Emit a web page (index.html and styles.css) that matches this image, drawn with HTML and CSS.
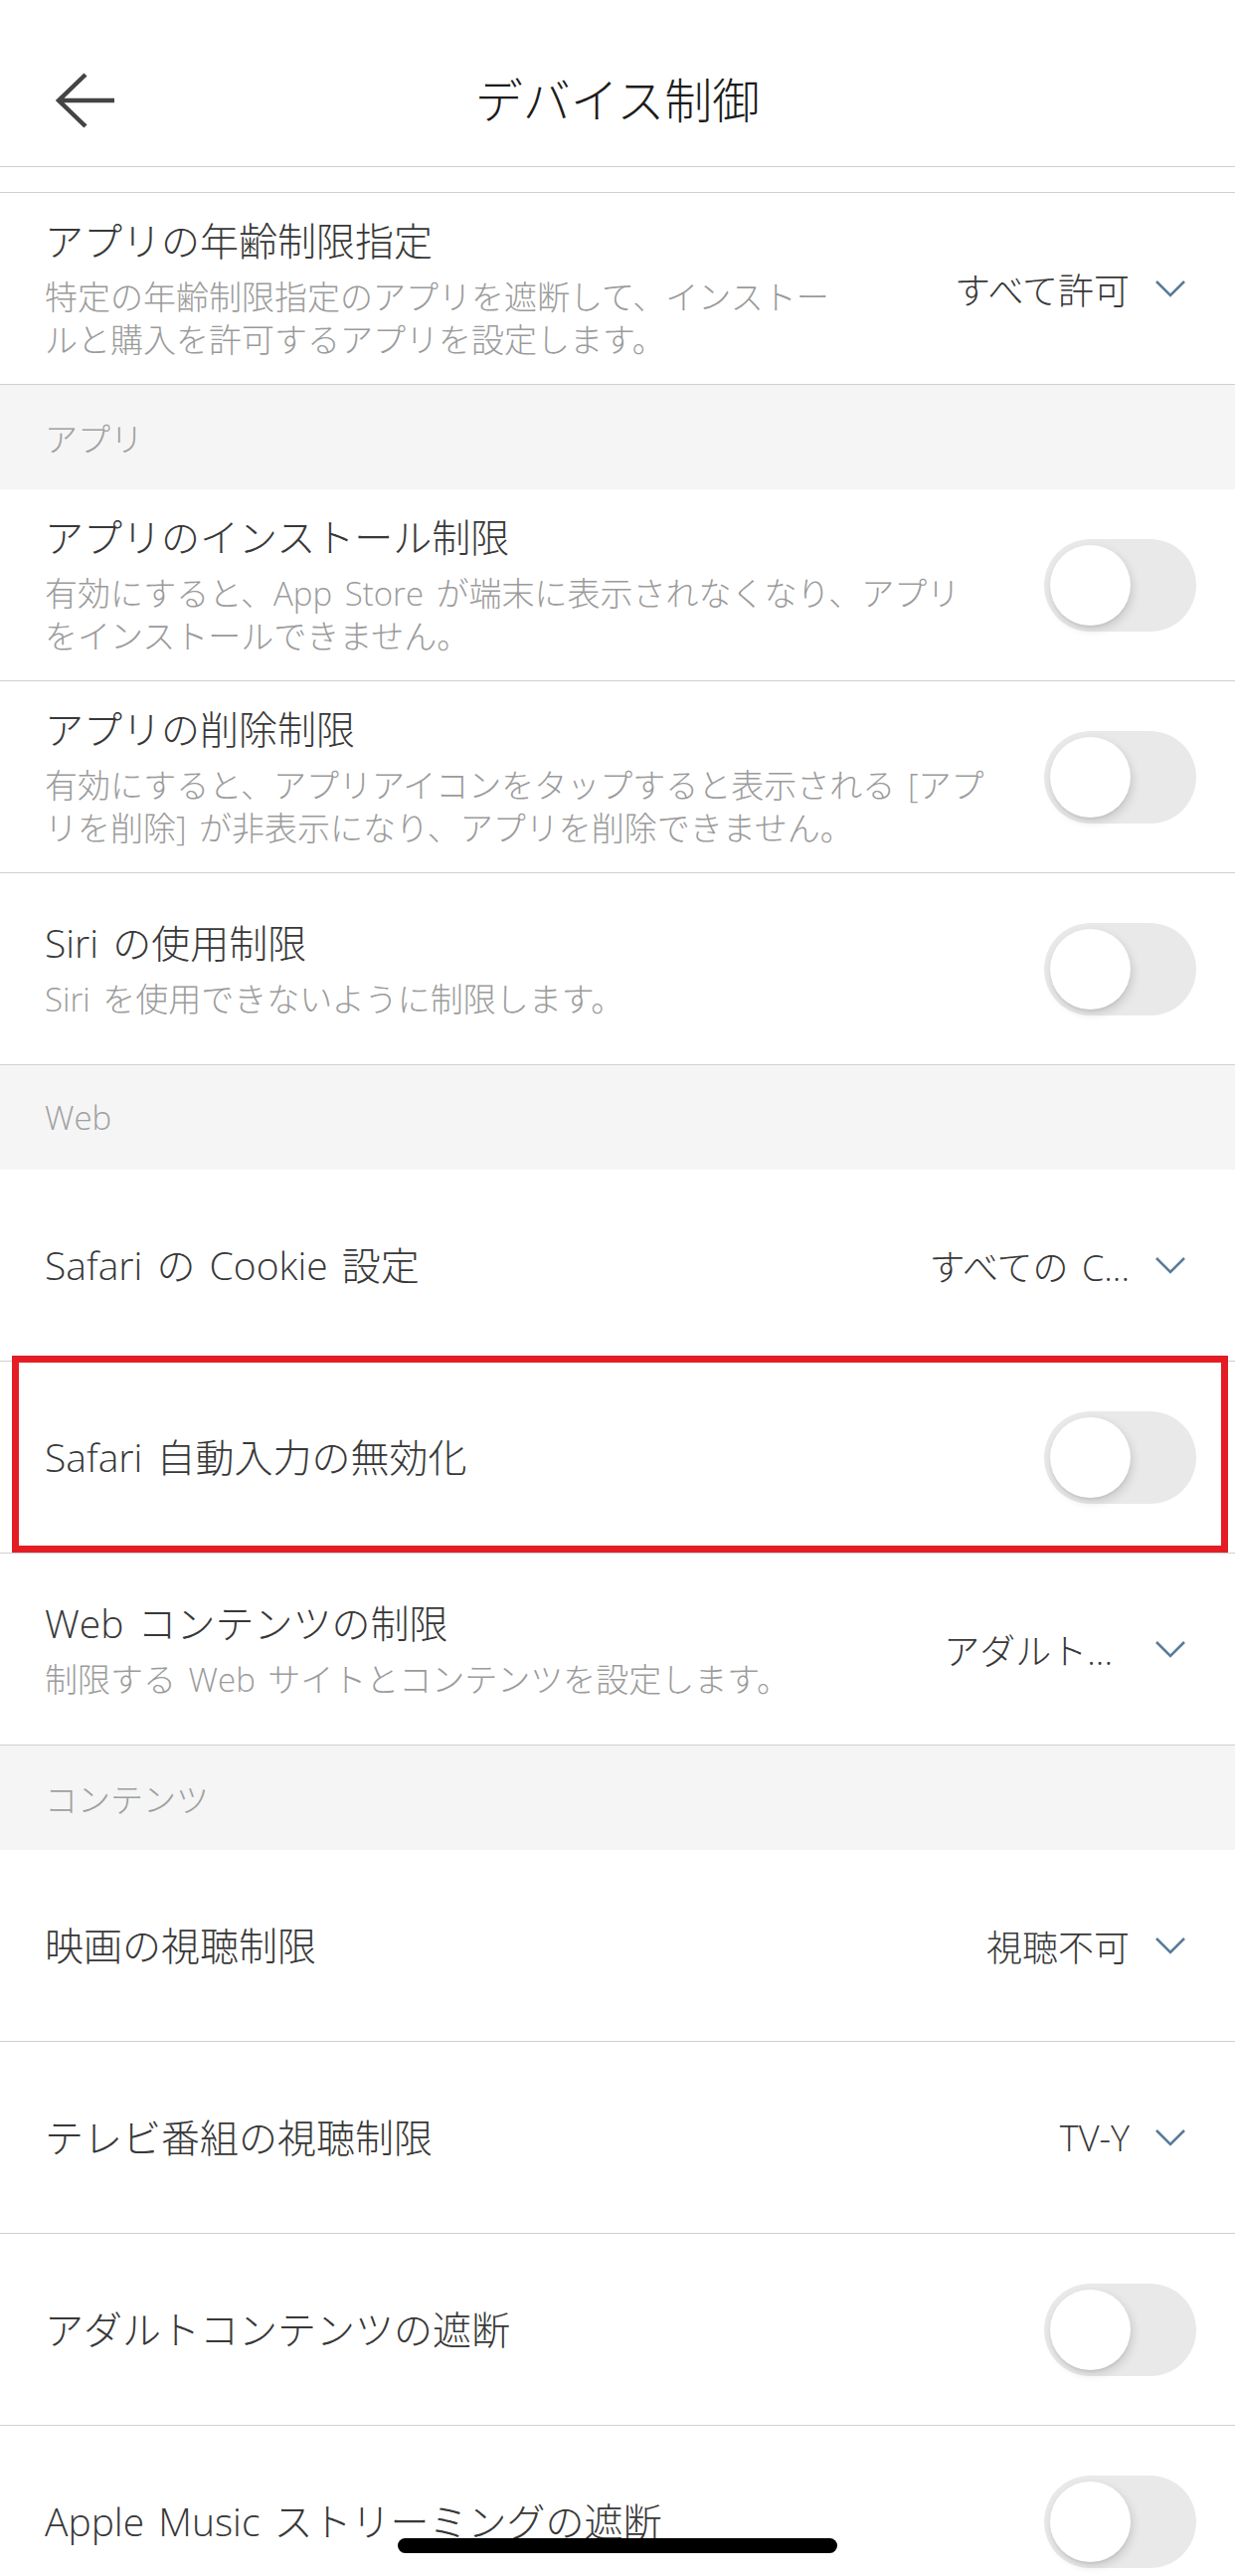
FILE: index.html
```html
<!DOCTYPE html>
<html lang="ja">
<head>
    <meta charset="UTF-8">
    <meta name="viewport" content="width=device-width, initial-scale=1.0">
    <title>デバイス制御</title>
    <link rel="stylesheet" href="styles.css">
</head>
<body>

    <div class="screen">

        <!-- Header -->
        <div class="header">
            <span class="back">
                <svg width="62" height="58" viewBox="0 0 62 58">
                    <path d="M32 3 L5 29 L32 55 M5 29 H61" fill="none" stroke="#444" stroke-width="4.5"/>
                </svg>
            </span>
            <h1>デバイス制御</h1>
            <span></span>
        </div>

        <div class="spacer"></div>

        <div class="row">
            <div class="row-text">
                <div class="title">アプリの年齢制限指定</div>
                <div class="desc">特定の年齢制限指定のアプリを遮断して、インストー<br>ルと購入を許可するアプリを設定します。</div>
            </div>
            <div class="select">
                <span>すべて許可</span>
                <svg class="chevron" width="32" height="18" viewBox="0 0 32 18"><path d="M2 2 L16 16 L30 2"/></svg>
            </div>
        </div>

        <!-- Apps -->
        <div class="section">アプリ</div>

        <div class="row">
            <div class="row-text">
                <div class="title">アプリのインストール制限</div>
                <div class="desc">有効にすると、App Store が端末に表示されなくなり、アプリ<br>をインストールできません。</div>
            </div>
            <span class="toggle"></span>
        </div>

        <div class="row">
            <div class="row-text">
                <div class="title">アプリの削除制限</div>
                <div class="desc">有効にすると、アプリアイコンをタップすると表示される [アプ<br>リを削除] が非表示になり、アプリを削除できません。</div>
            </div>
            <span class="toggle"></span>
        </div>

        <div class="row">
            <div class="row-text">
                <div class="title">Siri の使用制限</div>
                <div class="desc">Siri を使用できないように制限します。</div>
            </div>
            <span class="toggle"></span>
        </div>

        <!-- Web -->
        <div class="section">Web</div>

        <div class="row">
            <div class="row-text">
                <div class="title">Safari の Cookie 設定</div>
            </div>
            <div class="select">
                <span>すべての C...</span>
                <svg class="chevron" width="32" height="18" viewBox="0 0 32 18"><path d="M2 2 L16 16 L30 2"/></svg>
            </div>
        </div>

        <div class="row marked">
            <div class="row-text">
                <div class="title">Safari 自動入力の無効化</div>
            </div>
            <span class="toggle"></span>
            <div class="highlight"></div>
        </div>

        <div class="row">
            <div class="row-text">
                <div class="title">Web コンテンツの制限</div>
                <div class="desc">制限する Web サイトとコンテンツを設定します。</div>
            </div>
            <div class="select cut">
                <span>アダルト...</span>
                <svg class="chevron" width="32" height="18" viewBox="0 0 32 18"><path d="M2 2 L16 16 L30 2"/></svg>
            </div>
        </div>

        <!-- Contents -->
        <div class="section">コンテンツ</div>

        <div class="row">
            <div class="row-text">
                <div class="title">映画の視聴制限</div>
            </div>
            <div class="select">
                <span>視聴不可</span>
                <svg class="chevron" width="32" height="18" viewBox="0 0 32 18"><path d="M2 2 L16 16 L30 2"/></svg>
            </div>
        </div>

        <div class="row">
            <div class="row-text">
                <div class="title">テレビ番組の視聴制限</div>
            </div>
            <div class="select">
                <span>TV-Y</span>
                <svg class="chevron" width="32" height="18" viewBox="0 0 32 18"><path d="M2 2 L16 16 L30 2"/></svg>
            </div>
        </div>

        <div class="row">
            <div class="row-text">
                <div class="title">アダルトコンテンツの遮断</div>
            </div>
            <span class="toggle"></span>
        </div>

        <div class="row">
            <div class="row-text">
                <div class="title">Apple Music ストリーミングの遮断</div>
            </div>
            <span class="toggle"></span>
        </div>

        <div class="home-bar"></div>
    </div>

</body>
</html>
```

FILE: styles.css
```css
* {
    margin: 0;
    padding: 0;
    box-sizing: border-box;
}

body {
    font-family: "Open Sans", "Noto Sans CJK JP", "Noto Sans", sans-serif;
    font-weight: 300;
    word-spacing: 0.25em;
    background-color: #ffffff;
    color: #383838;
}

.screen {
    width: 1242px;
    height: 2590px;
    overflow: hidden;
    position: relative;
    background-color: #ffffff;
}

/* Header */
.header {
    display: grid;
    grid-template-columns: 1fr auto 1fr;
    align-items: center;
    height: 168px;
    padding-top: 34px;
    border-bottom: 1px solid #d0d0d0;
}

.header .back {
    display: flex;
    padding-left: 54px;
}

.header h1 {
    font-size: 48px;
    font-weight: 300;
    line-height: 1;
    color: #1c1c1c;
}

.spacer {
    height: 26px;
    border-bottom: 1px solid #d0d0d0;
}

/* Section titles */
.section {
    display: flex;
    align-items: center;
    height: 105px;
    padding-left: 45px;
    background-color: #f5f5f5;
    font-size: 33px;
    color: #a0a0a0;
}

/* Rows */
.row {
    display: flex;
    align-items: center;
    gap: 30px;
    height: 193px;
    padding: 0 39px 0 45px;
    border-bottom: 1px solid #d0d0d0;
}

.row-text {
    flex: 1;
    min-width: 0;
}

.title {
    font-size: 39px;
    line-height: 50px;
    color: #383838;
    white-space: nowrap;
}

.desc {
    margin-top: 10px;
    font-size: 33px;
    line-height: 43px;
    color: #9b9b9b;
    white-space: nowrap;
}

.select {
    display: flex;
    align-items: center;
    gap: 25px;
    padding-right: 10px;
    font-size: 36px;
    color: #383838;
    white-space: nowrap;
}

.select.cut span {
    padding-right: 17px;
}

.chevron path {
    fill: none;
    stroke: #5a7b97;
    stroke-width: 2.6;
}

/* Switch (off) */
.toggle {
    position: relative;
    flex: none;
    width: 153px;
    height: 93px;
    border-radius: 47px;
    background-color: #e9e9ea;
}

.toggle::after {
    content: "";
    position: absolute;
    top: 6px;
    left: 6px;
    width: 81px;
    height: 81px;
    border-radius: 50%;
    background-color: #ffffff;
    box-shadow: 2px 4px 10px rgba(0, 0, 0, 0.14), 0 2px 2px rgba(0, 0, 0, 0.05);
}

/* Highlight frame */
.row.marked {
    position: relative;
}

.highlight {
    position: absolute;
    top: -6px;
    left: 12px;
    right: 7px;
    bottom: 0;
    border: 7px solid #e41d24;
}

/* Home indicator */
.home-bar {
    position: absolute;
    left: 400px;
    bottom: 23px;
    width: 442px;
    height: 15px;
    border-radius: 8px;
    background-color: #000000;
}
```
